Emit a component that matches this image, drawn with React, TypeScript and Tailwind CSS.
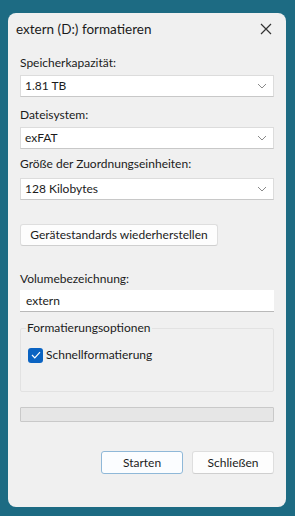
import React from "react";

const font = { fontFamily: 'Lato, "Noto Sans", sans-serif' };

function Chevron() {
  return (
    <svg width="10" height="6" viewBox="0 0 10 6" className="shrink-0">
      <path d="M1 1 L5 5 L9 1" fill="none" stroke="#8a8a8a" strokeWidth="1" />
    </svg>
  );
}

function Select({ value }: { value: string }) {
  return (
    <div className="flex h-[22px] items-center justify-between border border-[#dcdcdc] border-b-[#c8c8c8] bg-white pl-[4px] pr-[6px] text-[12px] text-[#1b1b1b]">
      <span>{value}</span>
      <Chevron />
    </div>
  );
}

export default function App() {
  return (
    <div className="flex h-[516px] w-[295px] bg-[#1d6b83] pt-[13px] pl-[8px] pr-[9px] pb-[9px]" style={font}>
      <div className="flex w-full flex-col rounded-[8px] bg-[#f0f0f0] px-[12px]">
        <div className="-ml-[4px] flex h-[30px] items-center justify-between pt-[2px] pr-[2px]">
          <span className="text-[13.5px] text-[#1b1b1b]">extern (D:) formatieren</span>
          <svg width="12" height="12" viewBox="0 0 12 12">
            <path d="M1 1 L11 11 M11 1 L1 11" stroke="#333" strokeWidth="1.2" />
          </svg>
        </div>
        <div className="mt-[12px] text-[12px] leading-[16px] text-[#1b1b1b]">Speicherkapazität:</div>
        <div className="mt-[4px]"><Select value="1.81 TB" /></div>
        <div className="mt-[10px] text-[12px] leading-[16px] text-[#1b1b1b]">Dateisystem:</div>
        <div className="mt-[4px]"><Select value="exFAT" /></div>
        <div className="mt-[7px] text-[12px] leading-[16px] text-[#1b1b1b]">Größe der Zuordnungseinheiten:</div>
        <div className="mt-[6px]"><Select value="128 Kilobytes" /></div>
        <div className="mt-[24px] flex">
          <div className="flex h-[22px] w-[198px] items-center justify-center rounded-[3px] border border-[#dedede] border-b-[#cfcfcf] bg-[#fdfdfd] text-[12px] text-[#1b1b1b]">
            Gerätestandards wiederherstellen
          </div>
        </div>
        <div className="mt-[25px] text-[12px] leading-[16px] text-[#1b1b1b]">Volumebezeichnung:</div>
        <div className="mt-[3px] flex h-[22px] items-center border-b border-b-[#b9b9b9] bg-white pl-[6px] text-[12px] text-[#1b1b1b]">extern</div>
        <div className="relative mt-[16px] h-[64px] rounded-[2px] border border-[#e2e2e2]">
          <div className="absolute left-[5px] top-[-9px] bg-[#f0f0f0] px-[1px] text-[12px] leading-[16px] text-[#1b1b1b]">Formatierungsoptionen</div>
          <div className="mt-[17px] ml-[7px] flex items-center gap-[3px]">
            <div className="flex h-[15px] w-[15px] items-center justify-center rounded-[3px] bg-[#0a63c2]">
              <svg width="10" height="8" viewBox="0 0 10 8">
                <path d="M1 4 L3.8 6.8 L9 1.2" fill="none" stroke="#fff" strokeWidth="1.2" />
              </svg>
            </div>
            <span className="text-[12px] text-[#1b1b1b]">Schnellformatierung</span>
          </div>
        </div>
        <div className="mt-[15px] h-[15px] rounded-[1px] border border-[#c9c9c9] bg-[#e6e6e6]" />
        <div className="mt-[29px] flex justify-end gap-[9px]">
          <div className="flex h-[23px] w-[82px] items-center justify-center rounded-[3px] border border-[#8fb8d8] bg-[#fbfdff] text-[12px] text-[#1b1b1b]">Starten</div>
          <div className="flex h-[23px] w-[82px] items-center justify-center rounded-[3px] border border-[#dedede] border-b-[#cfcfcf] bg-[#fdfdfd] text-[12px] text-[#1b1b1b]">Schließen</div>
        </div>
      </div>
    </div>
  );
}
